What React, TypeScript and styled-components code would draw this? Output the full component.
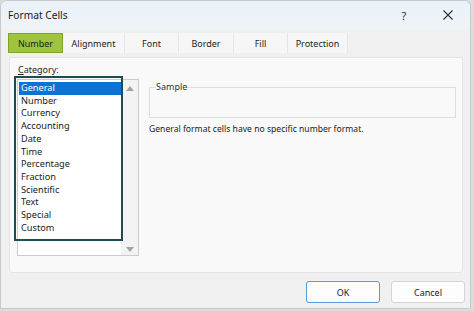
import React from "react";
import styled, { createGlobalStyle } from "styled-components";

const Global = createGlobalStyle`
  html, body { margin: 0; padding: 0; background: #dcdcdc; }
  body { font-family: "Noto Sans", "Open Sans", sans-serif; color: #1f1f1f; }
  * { box-sizing: border-box; }
`;

const Window = styled.div`
  width: 471px;
  height: 309px;
  background: #f0f0f0;
  border: 1px solid #c9c9c9;
  border-top-left-radius: 7px;
  border-top-right-radius: 7px;
  display: flex;
  flex-direction: column;
  overflow: hidden;
`;

const TitleBar = styled.div`
  height: 28px;
  flex: none;
  display: flex;
  align-items: center;
  padding-left: 7px;
  background: linear-gradient(#eaf2f9, #eef3f7);
`;

const Title = styled.div`
  flex: 1;
  font-size: 10.2px;
  color: #1a1a1a;
`;

const TitleButton = styled.div`
  width: 44px;
  height: 28px;
  display: flex;
  align-items: center;
  justify-content: center;
  font-size: 11px;
  color: #333;
`;

const TabRow = styled.div`
  display: flex;
  padding: 4px 0 0 7px;
  height: 27px;
  flex: none;
`;

const Tab = styled.div<{ $w: number; $active?: boolean }>`
  width: ${(p) => p.$w}px;
  height: 20px;
  display: flex;
  align-items: center;
  justify-content: center;
  font-size: 9px;
  color: #222;
  background: ${(p) => (p.$active ? "#9dc43c" : "#f6f6f6")};
  border: ${(p) => (p.$active ? "1.5px solid #7ea42c" : "none")};
  border-right: ${(p) => (p.$active ? "1.5px solid #7ea42c" : "1px solid #e6e6e6")};
`;

const Panel = styled.div`
  margin: 1px 7px 0 8px;
  height: 216px;
  flex: none;
  background: #f9f9f9;
  border: 1px solid #e4e4e4;
  border-radius: 3px;
  display: flex;
  padding: 4px 0 0 7px;
`;

const LeftCol = styled.div`
  display: flex;
  flex-direction: column;
  width: 123px;
`;

const Label = styled.div`
  font-size: 9px;
  height: 17px;
  line-height: 16px;
  padding-left: 1px;
  & u { text-decoration: underline; text-underline-offset: 1px; }
`;

const ListWrap = styled.div`
  position: relative;
  width: 122px;
  height: 177px;
`;

const ListBox = styled.div`
  width: 100%;
  height: 100%;
  background: #ffffff;
  border: 1px solid #cbcbcb;
  display: flex;
`;

const Items = styled.div`
  flex: 1;
  padding: 2px 0 0 1px;
`;

const Item = styled.div<{ $sel?: boolean }>`
  height: 12.73px;
  line-height: 12.73px;
  font-size: 9.2px;
  padding-left: 2px;
  background: ${(p) => (p.$sel ? "#0b73d6" : "transparent")};
  color: ${(p) => (p.$sel ? "#ffffff" : "#222")};
  white-space: nowrap;
`;

const ScrollBar = styled.div`
  width: 17px;
  background: #f3f3f3;
  display: flex;
  flex-direction: column;
  justify-content: space-between;
  align-items: center;
  padding: 6px 0 3px;
`;

const Highlight = styled.div`
  position: absolute;
  left: -3px;
  top: -3px;
  width: 109px;
  height: 165px;
  border: 2px solid #1d4c55;
  pointer-events: none;
`;

const RightCol = styled.div`
  flex: 1;
  margin-left: 9px;
  padding-top: 19px;
  padding-right: 6px;
  display: flex;
  flex-direction: column;
`;

const SampleBox = styled.fieldset`
  margin: 0;
  height: 37px;
  border: 1px solid #dedede;
  padding: 0 6px;
  & legend {
    font-size: 9px;
    padding: 0;
    margin-left: 0;
    line-height: 12px;
    color: #333;
  }
`;

const Desc = styled.div`
  margin-top: 5px;
  font-size: 8.6px;
  line-height: 12px;
  color: #222;
`;

const Footer = styled.div`
  flex: 1;
  display: flex;
  justify-content: flex-end;
  align-items: flex-start;
  gap: 11px;
  padding: 8px 5px 0 0;
`;

const Button = styled.div<{ $primary?: boolean }>`
  width: 74px;
  height: 22px;
  display: flex;
  align-items: center;
  justify-content: center;
  font-size: 9px;
  background: #fdfdfd;
  border: 1px solid ${(p) => (p.$primary ? "#5b9bd9" : "#d4d4d4")};
  border-radius: 3px;
  color: #222;
`;

const Arrow = ({ up }: { up?: boolean }) => (
  <svg width="8" height="5" viewBox="0 0 8 5">
    <path d={up ? "M0 5 L4 0 L8 5 Z" : "M0 0 L4 5 L8 0 Z"} fill="#a3a3a3" />
  </svg>
);

const categories = [
  "General",
  "Number",
  "Currency",
  "Accounting",
  "Date",
  "Time",
  "Percentage",
  "Fraction",
  "Scientific",
  "Text",
  "Special",
  "Custom",
];

const tabs: [string, number][] = [
  ["Number", 55],
  ["Alignment", 62],
  ["Font", 54],
  ["Border", 55],
  ["Fill", 54],
  ["Protection", 60],
];

export default function App() {
  return (
    <>
      <Global />
      <Window>
        <TitleBar>
          <Title>Format Cells</Title>
          <TitleButton>?</TitleButton>
          <TitleButton>
            <svg width="10" height="10" viewBox="0 0 10 10">
              <path d="M0.5 0.5 L9.5 9.5 M9.5 0.5 L0.5 9.5" stroke="#333" strokeWidth="1.1" />
            </svg>
          </TitleButton>
        </TitleBar>
        <TabRow>
          {tabs.map(([t, w], i) => (
            <Tab key={t} $w={w} $active={i === 0}>
              {t}
            </Tab>
          ))}
        </TabRow>
        <Panel>
          <LeftCol>
            <Label>
              <u>C</u>ategory:
            </Label>
            <ListWrap>
              <ListBox>
                <Items>
                  {categories.map((c, i) => (
                    <Item key={c} $sel={i === 0}>
                      {c}
                    </Item>
                  ))}
                </Items>
                <ScrollBar>
                  <Arrow up />
                  <Arrow />
                </ScrollBar>
              </ListBox>
              <Highlight />
            </ListWrap>
          </LeftCol>
          <RightCol>
            <SampleBox>
              <legend>Sample</legend>
            </SampleBox>
            <Desc>General format cells have no specific number format.</Desc>
          </RightCol>
        </Panel>
        <Footer>
          <Button $primary>OK</Button>
          <Button>Cancel</Button>
        </Footer>
      </Window>
    </>
  );
}
